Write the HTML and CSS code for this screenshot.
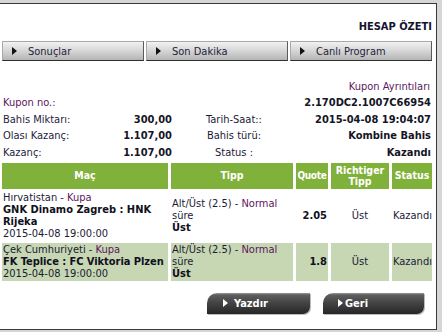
FILE: index.html
```html
<!DOCTYPE html>
<html lang="tr">
<head>
<meta charset="utf-8">
<title>Hesap Özeti</title>
<link rel="stylesheet" href="styles.css">
</head>
<body>
<div class="panel">
  <div class="title">HESAP ÖZETI</div>
  <div class="nav">
    <div class="tab"><span class="tri"></span>Sonuçlar</div>
    <div class="tab"><span class="tri"></span>Son Dakika</div>
    <div class="tab"><span class="tri"></span>Canlı Program</div>
  </div>
  <div class="info">
    <div class="caption">Kupon Ayrıntıları</div>
    <div class="lbl purple">Kupon no.:</div>
    <div></div>
    <div></div>
    <div class="val">2.170DC2.1007C66954</div>
    <div class="lbl">Bahis Miktarı:</div>
    <div class="val">300,00</div>
    <div class="mid">Tarih-Saat::</div>
    <div class="val">2015-04-08 19:04:07</div>
    <div class="lbl">Olası Kazanç:</div>
    <div class="val">1.107,00</div>
    <div class="mid">Bahis türü:</div>
    <div class="val">Kombine Bahis</div>
    <div class="lbl">Kazanç:</div>
    <div class="val">1.107,00</div>
    <div class="mid">Status :</div>
    <div class="val">Kazandı</div>
  </div>
  <div class="grid">
    <div class="th">Maç</div>
    <div class="th">Tipp</div>
    <div class="th th-quote">Quote</div>
    <div class="th">Richtiger Tipp</div>
    <div class="th">Status</div>

    <div class="td match"><span>Hırvatistan</span> - <span class="purple">Kupa</span><br><b>GNK Dinamo Zagreb : HNK Rijeka</b><br>2015-04-08 19:00:00</div>
    <div class="td tipp"><span class="line">Alt/Üst (2.5) - <span class="purple">Normal</span></span><span class="line">süre</span><b class="line">Üst</b></div>
    <div class="td quote"><b>2.05</b></div>
    <div class="td center">Üst</div>
    <div class="td status">Kazandı</div>

    <div class="td match alt"><span>Çek Cumhuriyeti</span> - <span class="purple">Kupa</span><br><b class="nowrap">FK Teplice : FC Viktoria Plzen</b><br>2015-04-08 19:00:00</div>
    <div class="td tipp alt"><span class="line">Alt/Üst (2.5) - <span class="purple">Normal</span></span><span class="line">süre</span><b class="line">Üst</b></div>
    <div class="td quote alt"><b>1.8</b></div>
    <div class="td center alt">Üst</div>
    <div class="td status alt">Kazandı</div>
  </div>
  <div class="buttons">
    <div class="btn btn-print"><span class="wtri"></span>Yazdır</div>
    <div class="btn btn-back"><span class="wtri"></span>Geri</div>
  </div>
</div>
</body>
</html>
```
FILE: styles.css
```css
html, body {
  margin: 0;
  padding: 0;
}
body {
  background: #d6d6d6;
  font-family: "DejaVu Sans Condensed", "DejaVu Sans", sans-serif;
  font-size: 11px;
  color: #1b1b36;
  width: 442px;
  height: 332px;
  overflow: hidden;
}
.panel {
  margin-top: 3px;
  width: 436px;
  height: 325px;
  background: #fff;
  border-top: 1px solid #3a3a3a;
  border-right: 1px solid #3a3a3a;
  border-bottom: 1px solid #3a3a3a;
}
.title {
  height: 37px;
  box-sizing: border-box;
  padding: 17px 4px 0 0;
  line-height: 12px;
  text-align: right;
  font-weight: bold;
  color: #141430;
}
.nav {
  display: flex;
  gap: 2px;
  padding-left: 2px;
}
.tab {
  width: 142px;
  height: 20px;
  box-sizing: border-box;
  display: flex;
  align-items: center;
  background: linear-gradient(#f2f2f2, #d2d2d2 55%, #b4b4b4);
  border: 1px solid #a8a8a8;
  border-bottom-color: #2e2e2e;
  border-right-color: #5a5a5a;
  color: #23233a;
}
.tri {
  width: 0;
  height: 0;
  border-left: 5px solid #111;
  border-top: 4px solid transparent;
  border-bottom: 4px solid transparent;
  margin: 0 11px 0 9px;
}
.info {
  display: grid;
  grid-template-columns: 97px 72px 124px 1fr;
  grid-auto-rows: 16.5px;
  align-items: center;
  margin-top: 17px;
  padding: 0 5px 0 3px;
}
.caption {
  grid-column: 1 / -1;
  text-align: right;
  color: #5a1a5e;
  padding-right: 1px;
}
.lbl {
  color: #1e1e3e;
}
.purple {
  color: #5c165e;
}
.val {
  text-align: right;
  font-weight: bold;
  color: #151525;
}
.mid {
  text-align: center;
}
.grid {
  display: grid;
  grid-template-columns: 166px 122px 32px 58px 40px;
  column-gap: 3px;
  row-gap: 2px;
  margin: 2px 0 0 2px;
}
.th {
  background: #80b13b;
  color: #fff;
  font-weight: bold;
  height: 26px;
  display: flex;
  align-items: center;
  justify-content: center;
  text-align: center;
  line-height: 11px;
  font-size: 10.5px;
}
.th-quote {
  font-size: 10px;
  letter-spacing: -0.3px;
}
.td {
  line-height: 12px;
  padding: 1px 1px;
  display: flex;
  flex-direction: column;
  justify-content: center;
}
.td.match {
  display: block;
}
.tipp .line {
  display: block;
}
.alt {
  background: #c7d6b3;
}
.alt.tipp {
  justify-content: flex-start;
}
.td b {
  color: #101020;
}
.nowrap {
  white-space: nowrap;
  letter-spacing: -0.05px;
}
.quote {
  text-align: right;
}
.center {
  text-align: center;
}
.status {
  padding-left: 1px;
  padding-right: 0;
  white-space: nowrap;
}
.buttons {
  display: flex;
  justify-content: flex-end;
  gap: 13px;
  margin-top: 12px;
  padding-right: 12px;
}
.btn {
  height: 21px;
  box-sizing: border-box;
  display: flex;
  align-items: center;
  color: #fff;
  font-weight: bold;
  background: linear-gradient(#9a9a9a 0, #5e5e5e 2px, #454545 45%, #262626 100%);
  border-top-left-radius: 10px;
  border-bottom-right-radius: 7px;
  box-shadow: 1px 1px 0 #bcbcbc;
}
.btn-print {
  width: 103px;
  padding-left: 16px;
}
.btn-back {
  width: 101px;
  padding-left: 15px;
}
.wtri {
  width: 0;
  height: 0;
  border-left: 5px solid #fff;
  border-top: 4.5px solid transparent;
  border-bottom: 4.5px solid transparent;
  margin-right: 5px;
}
.btn-print .wtri {
  margin-right: 6px;
}
.btn-back .wtri {
  margin-right: 2px;
}
```
